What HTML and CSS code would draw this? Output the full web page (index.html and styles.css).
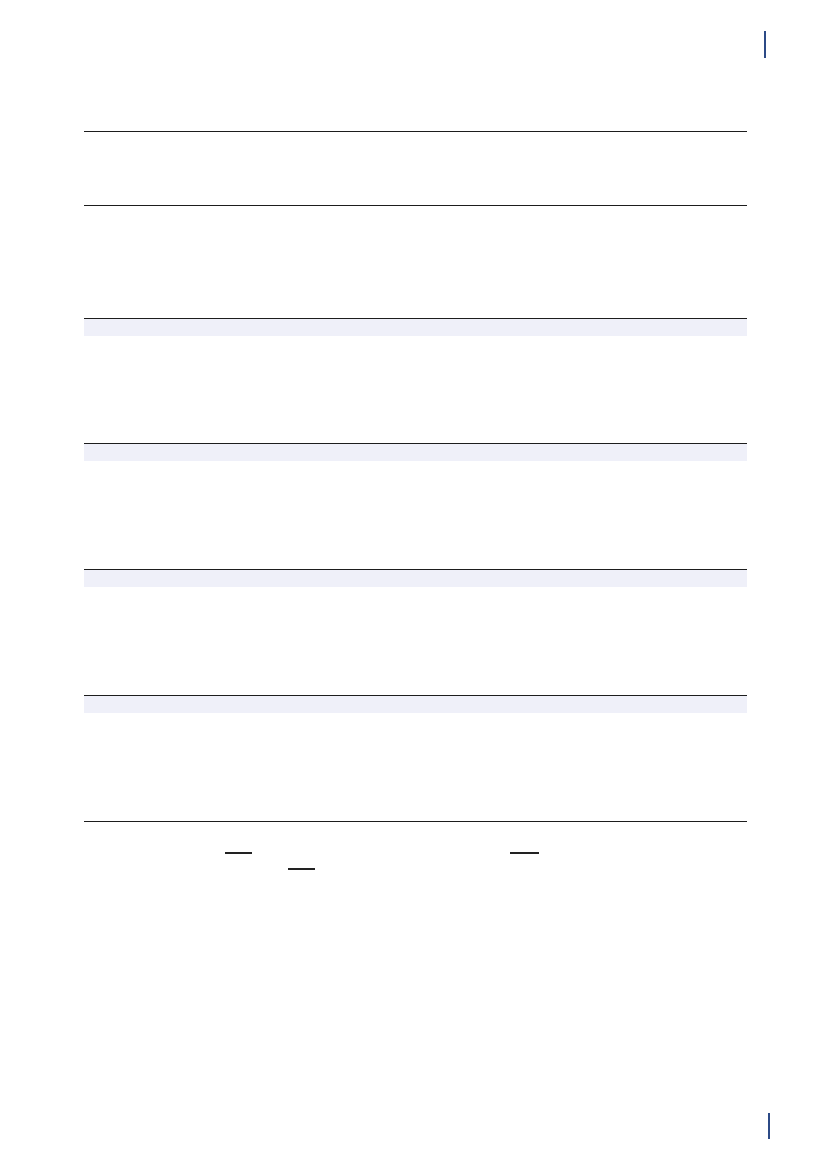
FILE: index.html
```html
<!DOCTYPE html>
<html>
<head>
<meta charset="utf-8">
<link rel="stylesheet" href="styles.css">
</head>
<body>
<div class="sheet">
  <div class="mark mark-top"></div>
  <div class="table">
    <div class="row r1"></div>
    <div class="row r2"></div>
    <div class="row r3"><div class="band"></div></div>
    <div class="row r4"><div class="band"></div></div>
    <div class="row r4"><div class="band"></div></div>
    <div class="row r4"><div class="band"></div></div>
    <div class="row rend"></div>
  </div>
  <div class="footer">
    <div class="fline">
      <span class="gap g1"></span><span class="blank"></span>
      <span class="gap g2"></span><span class="blank b2"></span>
    </div>
    <div class="fline">
      <span class="gap g3"></span><span class="blank"></span>
    </div>
  </div>
  <div class="mark mark-bottom"></div>
</div>
</body>
</html>
```
FILE: styles.css
```css
* { box-sizing: border-box; }
html, body { margin: 0; padding: 0; background: #ffffff; }
body { font-family: "Liberation Sans", Arial, sans-serif; }
.sheet { position: relative; width: 827px; height: 1169px; padding: 131px 80px 0 84px; }
.mark { position: absolute; width: 2px; background: #2c4a86; }
.mark-top { left: 764px; top: 31px; height: 27px; }
.mark-bottom { left: 768px; top: 1113px; height: 26px; }
.table { width: 663px; }
.row { border-top: 1px solid #1d1d1d; }
.r1 { height: 74px; }
.r2 { height: 113px; }
.r3 { height: 125px; }
.r4 { height: 126px; }
.rend { height: 0; }
.band { height: 17px; background: #eff0f9; }
.footer { padding-top: 16px; display: flex; flex-direction: column; }
.fline { height: 16px; display: flex; align-items: flex-end; }
.gap { display: inline-block; }
.g1 { width: 141px; }
.g2 { width: 258px; }
.g3 { width: 204px; }
.blank { display: inline-block; width: 27px; border-bottom: 2px solid #222; }
.b2 { width: 29px; }
```
